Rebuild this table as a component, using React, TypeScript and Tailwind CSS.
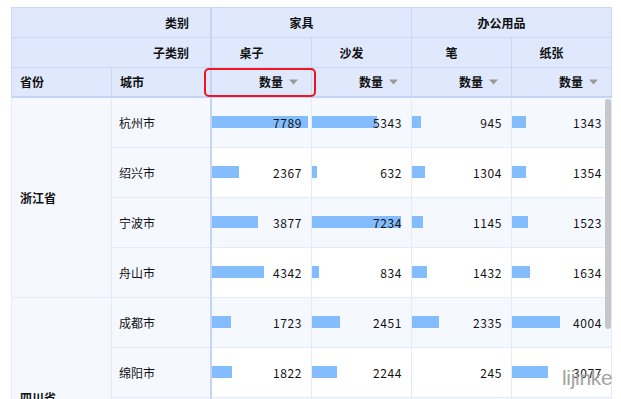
import React from 'react';

type CityRow = { city: string; values: number[] };
type ProvinceGroup = { province: string; cities: CityRow[] };

const data: ProvinceGroup[] = [
  {
    province: '浙江省',
    cities: [
      { city: '杭州市', values: [7789, 5343, 945, 1343] },
      { city: '绍兴市', values: [2367, 632, 1304, 1354] },
      { city: '宁波市', values: [3877, 7234, 1145, 1523] },
      { city: '舟山市', values: [4342, 834, 1432, 1634] },
    ],
  },
  {
    province: '四川省',
    cities: [
      { city: '成都市', values: [1723, 2451, 2335, 4004] },
      { city: '绵阳市', values: [1822, 2244, 245, 3077] },
      { city: '南充市', values: [1943, 2333, 2457, 3551] },
      { city: '乐山市', values: [2001, 2424, 2158, 2333] },
    ],
  },
];

const MIN = 245;
const MAX = 7789;
const BAR_MAX = 96;

const font = "font-['Noto_Sans_CJK_SC','Liberation_Sans',sans-serif]";

const Caret = () => (
  <svg width="9" height="6" viewBox="0 0 9 6" className="ml-[6px]">
    <path d="M0 0.5 L9 0.5 L4.5 5.5 Z" fill="#9a9a9a" />
  </svg>
);

const Th: React.FC<{ className?: string; children?: React.ReactNode }> = ({ className = '', children }) => (
  <div className={`flex items-center bg-[#dfe8fc] border-r border-b border-[#c9d8f6] text-[12px] font-bold text-[#111] ${className}`}>
    {children}
  </div>
);

const ValueCell: React.FC<{ value: number; striped: boolean }> = ({ value, striped }) => {
  const w = Math.max(0, ((value - MIN) / (MAX - MIN)) * BAR_MAX);
  return (
    <div
      className={`relative flex items-center justify-end pr-[9px] border-r border-b border-[#e3eafb] ${
        striped ? 'bg-[#f5f8fe]' : 'bg-white'
      }`}
    >
      {/* bar sits under the number */}
      <div className="absolute left-0 top-[18px] h-[12px] bg-[#84bdfd]" style={{ width: w }} />
      <span className="relative text-[12px] tracking-[0.6px] text-[#111]">{value}</span>
    </div>
  );
};

export default function App() {
  let rowIndex = 0;

  return (
    <div className={`relative w-[621px] h-[399px] overflow-hidden bg-white ${font}`}>
      <div className="ml-[11px] mt-[7px] w-[601px]">
        {/* Column header */}
        <div className="grid grid-cols-[100px_100px_100px_100px_100px_100px] grid-rows-[30px_30px_30px] border-l border-t border-[#c9d8f6]">
          <Th className="col-span-2 justify-end pr-[21px] border-r-2 border-r-[#c3d4f6]">类别</Th>
          <Th className="col-span-2 justify-center pr-[20px]">家具</Th>
          <Th className="col-span-2 justify-center pr-[20px]">办公用品</Th>

          <Th className="col-span-2 justify-end pr-[21px] border-r-2 border-r-[#c3d4f6]">子类别</Th>
          <Th className="justify-center pr-[20px]">桌子</Th>
          <Th className="justify-center pr-[20px]">沙发</Th>
          <Th className="justify-center pr-[20px]">笔</Th>
          <Th className="justify-center pr-[20px]">纸张</Th>

          <Th className="pl-[8px] border-b-2 border-b-[#c3d4f6]">省份</Th>
          <Th className="pl-[8px] border-b-2 border-b-[#c3d4f6] border-r-2 border-r-[#c3d4f6]">城市</Th>
          {['桌子', '沙发', '笔', '纸张'].map((k) => (
            <Th key={k} className="justify-end pr-[13px] border-b-2 border-b-[#c3d4f6] font-normal">
              <span className="font-bold">数量</span>
              <Caret />
            </Th>
          ))}
        </div>

        {/* Body */}
        <div className="relative grid grid-cols-[100px_100px_100px_100px_100px_100px] auto-rows-[50px] border-l border-[#e3eafb]">
          {data.map((g) => (
            <React.Fragment key={g.province}>
              <div className="col-start-1 row-span-4 flex items-center pl-[8px] bg-[#f5f8fe] border-r border-b border-[#e3eafb] text-[12px] font-bold text-[#111]">
                {g.province}
              </div>
              {g.cities.map((c) => {
                const striped = rowIndex % 2 === 0;
                rowIndex += 1;
                return (
                  <React.Fragment key={c.city}>
                    <div className="col-start-2 flex items-center pl-[7px] bg-[#f5f8fe] border-b border-[#e3eafb] border-r-2 border-r-[#c3d4f6] text-[12px] text-[#111]">
                      {c.city}
                    </div>
                    {c.values.map((v, i) => (
                      <ValueCell key={i} value={v} striped={striped} />
                    ))}
                  </React.Fragment>
                );
              })}
            </React.Fragment>
          ))}

          {/* scrollbar thumb */}
          <div className="absolute right-[1px] top-[1px] w-[6px] h-[230px] rounded-full bg-[#c6c7c9]" />
        </div>
      </div>

      {/* highlight around the first measure field */}
      <div className="absolute left-[204px] top-[68px] w-[112px] h-[29px] rounded-[5px] border-2 border-[#f0141e]" />

      {/* watermark */}
      <div className="absolute left-[562px] top-[362px] text-[21px] text-[#a3a3a3] font-['Liberation_Sans',sans-serif] tracking-[-0.3px]">
        lijinke
      </div>
    </div>
  );
}
